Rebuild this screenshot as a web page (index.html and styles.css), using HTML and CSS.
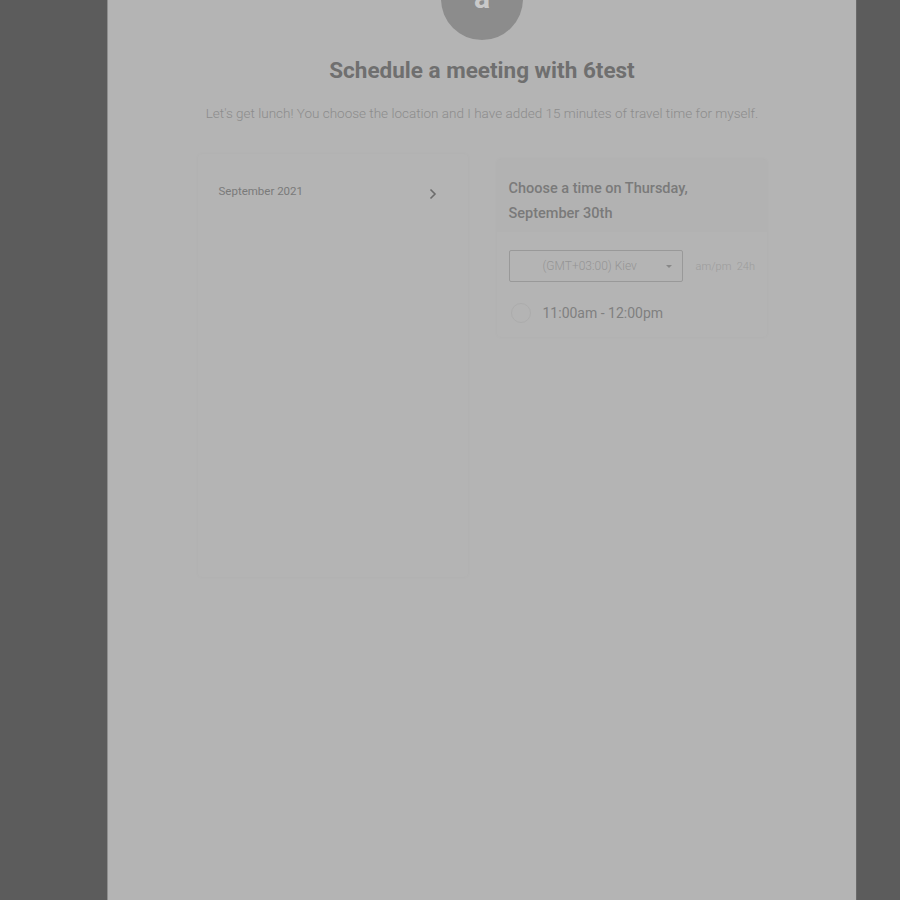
FILE: index.html
```html
<!DOCTYPE html>
<html>
<head>
<meta charset="utf-8">
<link rel="stylesheet" href="styles.css">
</head>
<body>
<div class="panel">
  <div class="avatar"><span>a</span></div>
  <h1 class="title">Schedule a meeting with 6test</h1>
  <p class="subtitle">Let's get lunch! You choose the location and I have added 15 minutes of travel time for myself.</p>
  <div class="cards">
    <div class="card cal">
      <div class="cal-head">
        <span class="month">September 2021</span>
        <svg class="chev" width="10" height="12" viewBox="0 0 10 12"><path d="M2.5 1.5 L7 6 L2.5 10.5" fill="none" stroke="#6c6c6c" stroke-width="1.6"/></svg>
      </div>
    </div>
    <div class="card times">
      <div class="times-head">Choose a time on Thursday,<br>September 30th</div>
      <div class="controls">
        <div class="select"><span>(GMT+03:00) Kiev</span><i class="caret"></i></div>
        <div class="fmt">am/pm&nbsp; 24h</div>
      </div>
      <div class="slot"><span class="dot"></span><span class="slot-text">11:00am - 12:00pm</span></div>
    </div>
  </div>
</div>
</body>
</html>
```
FILE: styles.css
```css
html, body { margin: 0; padding: 0; }
body {
  background: #5c5c5c;
  font-family: Roboto, "Liberation Sans", sans-serif;
  height: 900px;
  overflow: hidden;
}
.panel {
  margin-left: 107px;
  width: 748px;
  height: 900px;
  background: #b4b4b4;
  border-left: 1px solid #8e8e8e;
  border-right: 1px solid #6a6a6a;
  display: flex;
  flex-direction: column;
  align-items: center;
}
.avatar {
  width: 82px;
  height: 82px;
  border-radius: 50%;
  background: #8c8c8c;
  margin-top: -42px;
  display: flex;
  align-items: flex-end;
  justify-content: center;
  flex-shrink: 0;
}
.avatar span {
  color: #c9c9c9;
  font-size: 30px;
  font-weight: 700;
  line-height: 30px;
  margin-bottom: 27px;
}
.title {
  margin: 17px 0 0;
  font-size: 22.5px;
  font-weight: 700;
  color: #6f6f6f;
  letter-spacing: 0;
  line-height: 26px;
}
.subtitle {
  margin: 22px 0 0;
  font-size: 13.5px;
  font-weight: 300;
  color: #8c8c8c;
  line-height: 16px;
}
.cards {
  display: flex;
  gap: 29px;
  margin-top: 33px;
  align-items: flex-start;
}
.card {
  width: 270px;
  background: #b4b4b4;
  border-radius: 4px;
  box-shadow: 0 0 5px rgba(0,0,0,0.025);
}
.cal { height: 423px; }
.cal-head {
  display: flex;
  justify-content: space-between;
  align-items: center;
  padding: 28px 30px 0 21px;
}
.month { font-size: 11.5px; color: #7a7a7a; }
.chev { margin-top: 6px; }
.times { margin-top: 5px; padding-bottom: 14px; }
.times-head {
  background: #b2b2b2;
  padding: 17px 12px 6px;
  font-size: 14.5px;
  font-weight: 500;
  color: #7a7a7a;
  line-height: 25px;
  border-radius: 4px 4px 0 0;
}
.controls {
  display: flex;
  align-items: center;
  padding: 18px 12px 0;
  gap: 13px;
}
.select {
  width: 174px;
  height: 32px;
  box-sizing: border-box;
  border: 1px solid #999;
  border-radius: 2px;
  display: flex;
  align-items: center;
  padding-left: 33px;
  padding-right: 10px;
  font-size: 12px;
  font-weight: 300;
  color: #959595;
  flex-shrink: 0;
}
.select span { flex: 1; }
.caret {
  width: 0; height: 0;
  border-left: 3px solid transparent;
  border-right: 3px solid transparent;
  border-top: 3px solid #888;
}
.fmt { font-size: 11px; font-weight: 300; color: #9c9c9c; white-space: nowrap; }
.slot {
  display: flex;
  align-items: center;
  padding: 21px 12px 0 14px;
  gap: 12px;
}
.dot {
  width: 18px; height: 18px;
  border-radius: 50%;
  border: 1px solid #acacac;
}
.slot-text { font-size: 14px; font-weight: 400; color: #808080; }
```
